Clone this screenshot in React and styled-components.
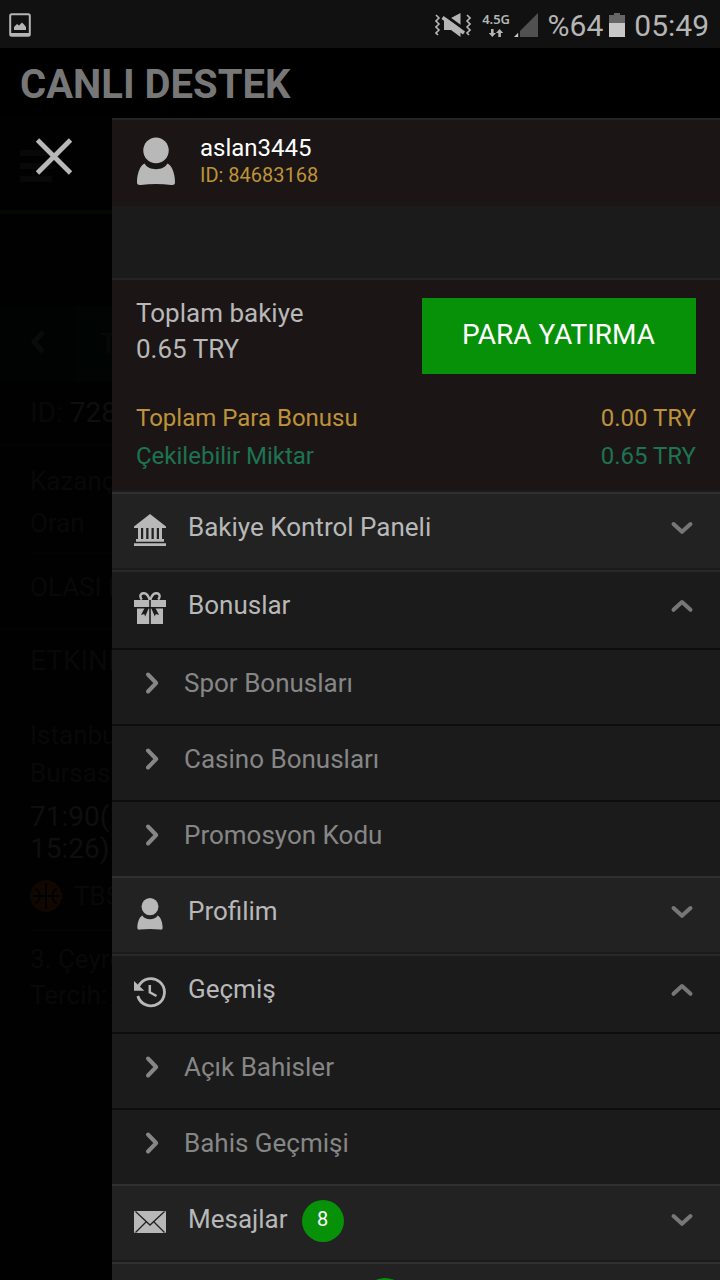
import React from "react";
import styled, { createGlobalStyle } from "styled-components";

const GlobalStyle = createGlobalStyle`
  * {
    box-sizing: border-box;
  }

  body {
    margin: 0;
    background: #000;
    font-family: Roboto, "Liberation Sans", sans-serif;
  }

  svg {
    display: block;
    flex-shrink: 0;
  }
`;

const Screen = styled.div`
  width: 720px;
  height: 1280px;
  overflow: hidden;
  background: #000;
  display: flex;
  flex-direction: column;
`;

const StatusBar = styled.div`
  height: 48px;
  flex-shrink: 0;
  padding: 0 11px 0 9px;
  background: #111;
  color: #b5b5b5;
  display: flex;
  align-items: center;
  justify-content: space-between;

  > svg {
    margin-top: 2px;
  }
`;

const StatusGroup = styled.div`
  display: flex;
  align-items: center;

  > svg {
    margin-top: 2px;
  }
`;

const StatusText = styled.span`
  font-size: 30px;
  line-height: 48px;
  padding-top: 3px;
  margin: 0 ${(props) => props.$right || 0}px 0 9px;
`;

const Network = styled.div`
  width: 27px;
  margin: 0 4px 0 12px;
  display: flex;
  flex-direction: column;
  align-items: center;
  font-family: "Noto Sans", sans-serif;
  font-weight: 600;
  font-size: 13px;
  line-height: 15px;

  svg {
    margin-top: 2px;
  }
`;

const TitleBar = styled.h1`
  height: 70px;
  flex-shrink: 0;
  margin: 0;
  padding-left: 20px;
  font-size: 40px;
  line-height: 73px;
  font-weight: 700;
  color: #777;
`;

const Main = styled.div`
  flex: 1;
  min-height: 0;
  display: flex;
`;

const Behind = styled.div`
  position: relative;
  width: 112px;
  flex-shrink: 0;
  overflow: hidden;
  background: #010101;
  color: #080808;
  font-size: 26px;
  white-space: nowrap;
`;

const CloseButton = styled.button`
  position: absolute;
  top: 20px;
  left: 36px;
  padding: 0;
  border: 0;
  background: none;
`;

const BehindHeader = styled.div`
  height: 96px;
  padding: 32px 20px 0;
  border-bottom: 4px solid #000a00;
`;

const BehindNav = styled.div`
  height: 76px;
  margin-top: 92px;
  background: #000504;
  display: flex;
  align-items: center;
`;

const BehindBack = styled.div`
  width: 76px;
  height: 76px;
  flex-shrink: 0;
  padding: 24px 30px;
  background: #000302;
`;

const BehindTitle = styled.span`
  padding: 0 0 1px 24px;
  font-size: 28px;
`;

const BehindLine = styled.div`
  height: ${(props) => props.$height}px;
  line-height: ${(props) => props.$height}px;
  padding-left: 30px;
  color: ${(props) => (props.$strong ? "#0e0e0e" : "#080808")};
  font-size: ${(props) => props.$size || 26}px;

  b {
    font-weight: 400;
    color: #0e0e0e;
  }
`;

const BehindSport = styled.div`
  height: 64px;
  padding: 0 0 2px 30px;
  display: flex;
  align-items: center;
  gap: 12px;
`;

const BehindRule = styled.div`
  height: 2px;
  margin-left: ${(props) => props.$left || 0}px;
  background: #030303;
`;

const Panel = styled.div`
  flex: 1;
  min-width: 0;
  background: #1b1b1b;
  color: #b8b8b8;
`;

const User = styled.div`
  height: 88px;
  padding: 17px 24px 0 25px;
  border-top: 2px solid #252323;
  background: #1b1615;
  display: flex;
  gap: 25px;
`;

const UserName = styled.div`
  margin-top: -3px;
  font-size: 24px;
  line-height: 28px;
  color: #fff;
`;

const UserId = styled.div`
  font-size: 20px;
  line-height: 26px;
  color: #be9239;
`;

const Balance = styled.div`
  height: 214px;
  margin-top: 72px;
  padding: 0 24px;
  border-top: 2px solid #252323;
  border-bottom: 2px solid #1b1b1b;
  background: #1b1615;
`;

const BalanceTop = styled.div`
  padding-top: 18px;
  display: flex;
  justify-content: space-between;
`;

const Total = styled.div`
  margin-top: -3px;
  font-size: 26px;
  line-height: 36px;
`;

const Deposit = styled.button`
  width: 274px;
  height: 76px;
  padding: 0 1px 4px 0;
  border: 0;
  background: #079108;
  color: #fff;
  font-family: inherit;
  font-size: 28px;
`;

const BalanceList = styled.div`
  margin-top: 25px;
`;

const BalanceRow = styled.div`
  display: flex;
  justify-content: space-between;
  font-size: 24px;
  line-height: 38px;
  color: ${(props) => props.$color};
`;

const MenuRow = styled.div`
  height: 78px;
  padding: 0 26px 0 22px;
  border-top: 2px solid ${(props) => (props.$open ? "#282828" : "#303030")};
  border-bottom: 2px solid #1b1b1b;
  background: ${(props) => (props.$open ? "#1b1b1b" : "#222")};
  display: flex;
  align-items: flex-start;

  > svg:first-child {
    margin: 20px 22px 0 0;
  }

  > svg:last-child {
    margin: 26px 0 0 auto;
  }
`;

const MenuLabel = styled.span`
  font-size: 26px;
  line-height: 66px;
`;

const Badge = styled.span`
  width: 42px;
  height: 42px;
  margin: 14px 0 0 14px;
  border-radius: 50%;
  background: #079108;
  color: #fff;
  font-size: 20px;
  line-height: 38px;
  text-align: center;
`;

const NextRow = styled(MenuRow)`
  padding-left: 238px;
`;

const SubRow = styled.div`
  height: 76px;
  padding-left: 32px;
  border-top: 2px solid #0d0d0d;
  display: flex;
  align-items: flex-start;
  color: #868686;
  font-size: 26px;
  line-height: 66px;

  svg {
    margin: 21px 24px 0 0;
  }
`;

const UserIcon = ({ width = 32, height = 32, viewBox = "-4 0 40 40.5" }) => (
  <svg width={width} height={height} viewBox={viewBox} fill="#b8b8b8">
    <ellipse cx="16" cy="10.9" rx="10.7" ry="10.9" />
    <path d="M6.4 22C9.4 28.4 22.6 28.4 25.6 22C29.5 23.8 32 30.5 32 38Q32 40.4 29 40Q16 38.2 3 40Q0 40.4 0 38C0 30.5 2.5 23.8 6.4 22Z" />
  </svg>
);

const BankIcon = () => (
  <svg width="32" height="32" viewBox="0 0 32 32" fill="#b8b8b8">
    <path d="M16 0L32 12.6V14H0V12.6Z" />
    <path d="M4 14h3v11H4zM9.2 14h3v11h-3zM14.5 14h3v11h-3zM19.8 14h3v11h-3zM25 14h3v11h-3z" />
    <path d="M2 25h28v2.8H2zM0 29.2h32v2.8H0z" />
  </svg>
);

const GiftIcon = () => (
  <svg width="32" height="32" viewBox="0 0 32 32">
    <path
      d="M15.7 8C14.5 3.8 12 1 9.3 1.2C6 1.4 5.5 5 7.8 7.6M16.3 8C17.5 3.8 20 1 22.7 1.2C26 1.4 26.5 5 24.2 7.6"
      fill="none"
      stroke="#b8b8b8"
      strokeWidth="2.4"
    />
    <path d="M0 8h32v7H0zM3 16.5h26V32H3z" fill="#b8b8b8" />
    <path d="M15.2 8h1.6v24h-1.6z" fill="#1b1b1b" />
    <path
      d="M14.8 16L11.2 24.5L10.2 22L7 23L10.6 16ZM17.2 16L20.8 24.5L21.8 22L25 23L21.4 16Z"
      fill="#1b1b1b"
    />
  </svg>
);

const HistoryIcon = () => (
  <svg width="32" height="32" viewBox="0 0 32 32">
    <path
      d="M4.6 10.3A13.6 13.6 0 1 1 3.8 20"
      fill="none"
      stroke="#b8b8b8"
      strokeWidth="2.8"
    />
    <path d="M0 5L10.3 14.8H0Z" fill="#b8b8b8" />
    <path d="M15.8 9V16.3L22.5 20" fill="none" stroke="#b8b8b8" strokeWidth="2.5" />
  </svg>
);

const MailIcon = () => (
  <svg width="32" height="32" viewBox="0 0 32 32">
    <rect y="5" width="32" height="22" rx="1" fill="#b8b8b8" />
    <path
      d="M1.5 5.5L16 19L30.5 5.5M1.5 26.5L12 16M30.5 26.5L20 16"
      fill="none"
      stroke="#222"
      strokeWidth="1.3"
    />
  </svg>
);

const Arrow = ({ up }) => (
  <svg width="24" height="16" viewBox="0 0 24 16">
    <path
      d={up ? "M3.5 11.8L12 4L20.5 11.8" : "M3.5 4L12 11.8L20.5 4"}
      fill="none"
      stroke="#777"
      strokeWidth="4"
      strokeLinecap="round"
      strokeLinejoin="round"
    />
  </svg>
);

const SubArrow = () => (
  <svg width="16" height="24" viewBox="0 0 16 24">
    <path
      d="M4 3.5L12.2 12L4 20.5"
      fill="none"
      stroke="#868686"
      strokeWidth="4"
      strokeLinecap="round"
      strokeLinejoin="round"
    />
  </svg>
);

const BatteryIcon = () => (
  <svg width="16" height="24" viewBox="0 0 16 24">
    <path d="M0 2h5V0h6v2h5v8H0z" fill="#666" />
    <path d="M0 10h16v14H0z" fill="#c8c8c8" />
  </svg>
);

const MuteIcon = () => (
  <svg width="36" height="24" viewBox="0 0 36 24">
    <path
      d="M1 2l3 3-3 3 3 3-3 3 3 3-3 3 2 2M32 2l3 3-3 3 3 3-3 3 3 3-3 3 2 2"
      fill="none"
      stroke="#b5b5b5"
      strokeWidth="1.6"
    />
    <path d="M9 5h7L25.5 0v24L16 17H9z" fill="#b5b5b5" />
    <path d="M9.5 2L31 17.5" stroke="#111" strokeWidth="3" />
    <path d="M7.5 4.5L29 20" stroke="#b5b5b5" strokeWidth="3.5" />
  </svg>
);

const menu = [
  { label: "Bakiye Kontrol Paneli", icon: <BankIcon /> },
  {
    label: "Bonuslar",
    icon: <GiftIcon />,
    items: ["Spor Bonusları", "Casino Bonusları", "Promosyon Kodu"],
  },
  { label: "Profilim", icon: <UserIcon /> },
  {
    label: "Geçmiş",
    icon: <HistoryIcon />,
    items: ["Açık Bahisler", "Bahis Geçmişi"],
  },
  { label: "Mesajlar", icon: <MailIcon />, badge: "8" },
];

function Status() {
  return (
    <StatusBar>
      <svg width="22" height="24" viewBox="0 0 22 24">
        <rect x="1.2" y="1.2" width="19.6" height="21.6" rx="1.5" fill="none" stroke="#b5b5b5" strokeWidth="2" />
        <path d="M1 20h20v3H1zM5 17v-3l3-3 2 1.5 3-3 2 2 2 2.5V17z" fill="#b5b5b5" />
      </svg>
      <StatusGroup>
        <MuteIcon />
        <Network>
          4.5G
          <svg width="16" height="8" viewBox="0 0 16 8" fill="#b5b5b5">
            <path d="M3 0h2.6v4H8L4.3 8 .8 4H3zM10.3 8h2.6V4h2.3L11.6 0 8 4h2.3z" />
          </svg>
        </Network>
        <svg width="25" height="24" viewBox="0 0 25 24">
          <path d="M24 0v24H6V18z" fill="#505050" />
          <path d="M0 24l4.2-4.2V24z" fill="#c8c8c8" />
        </svg>
        <StatusText $right={6}>%64</StatusText>
        <BatteryIcon />
        <StatusText>05:49</StatusText>
      </StatusGroup>
    </StatusBar>
  );
}

function CouponBehind() {
  return (
    <Behind>
      <BehindHeader>
        <svg width="32" height="32" viewBox="0 0 32 32" fill="#080808">
          <path d="M0 0h32v6H0zM0 13h32v6H0zM0 26h32v6H0z" />
        </svg>
      </BehindHeader>
      <BehindNav>
        <BehindBack>
          <svg width="16" height="26" viewBox="0 0 16 26">
            <path d="M13 2L4 12L13 22" fill="none" stroke="#0a0a0a" strokeWidth="5" />
          </svg>
        </BehindBack>
        <BehindTitle>T</BehindTitle>
      </BehindNav>
      <BehindLine $height={62} $size={28}>
        ID: <b>728</b>
      </BehindLine>
      <BehindRule />
      <BehindLine $height={70}>Kazanç</BehindLine>
      <BehindLine $height={14}>Oran</BehindLine>
      <BehindLine $height={22} />
      <BehindRule $left={30} />
      <BehindLine $height={66}>OLASI K</BehindLine>
      <BehindLine $height={8} />
      <BehindRule />
      <BehindLine $height={62} $size={28}>ETKINL</BehindLine>
      <BehindLine $height={24} />
      <BehindLine $height={38}>Istanbu</BehindLine>
      <BehindLine $height={38}>Bursas</BehindLine>
      <BehindLine $height={9} />
      <BehindLine $height={32} $size={28} $strong>71:90(1</BehindLine>
      <BehindLine $height={32} $size={28} $strong>15:26)</BehindLine>
      <BehindSport>
        <svg width="32" height="32" viewBox="0 0 32 32">
          <circle cx="16" cy="16" r="16" fill="#120600" />
          <path
            d="M16 3v26M3 16h26M5 9c6 1 6 13 0 14M27 9c-6 1-6 13 0 14"
            fill="none"
            stroke="#010101"
            strokeWidth="2"
          />
        </svg>
        <span>TBS</span>
      </BehindSport>
      <BehindRule $left={30} />
      <BehindLine $height={10} />
      <BehindLine $height={36}>3. Çeyre</BehindLine>
      <BehindLine $height={36}>Tercih:</BehindLine>
      <CloseButton aria-label="Kapat">
        <svg width="36" height="37" viewBox="0 0 36 37">
          <path d="M1.5 2L34.5 35M34.5 2L1.5 35" stroke="#b8b8b8" strokeWidth="4.8" />
        </svg>
      </CloseButton>
    </Behind>
  );
}

function App() {
  return (
    <Screen>
      <GlobalStyle />
      <Status />
      <TitleBar>CANLI DESTEK</TitleBar>
      <Main>
        <CouponBehind />
        <Panel>
          <User>
            <UserIcon width={38} height={49} viewBox="0 0 32 40.5" />
            <div>
              <UserName>aslan3445</UserName>
              <UserId>ID: 84683168</UserId>
            </div>
          </User>
          <Balance>
            <BalanceTop>
              <Total>
                <div>Toplam bakiye</div>
                <div>0.65 TRY</div>
              </Total>
              <Deposit>PARA YATIRMA</Deposit>
            </BalanceTop>
            <BalanceList>
              <BalanceRow $color="#be9239">
                <span>Toplam Para Bonusu</span>
                <span>0.00 TRY</span>
              </BalanceRow>
              <BalanceRow $color="#1d7352">
                <span>Çekilebilir Miktar</span>
                <span>0.65 TRY</span>
              </BalanceRow>
            </BalanceList>
          </Balance>
          {menu.map((entry) => (
            <React.Fragment key={entry.label}>
              <MenuRow $open={Boolean(entry.items)}>
                {entry.icon}
                <MenuLabel>{entry.label}</MenuLabel>
                {entry.badge && <Badge>{entry.badge}</Badge>}
                <Arrow up={Boolean(entry.items)} />
              </MenuRow>
              {entry.items &&
                entry.items.map((item) => (
                  <SubRow key={item}>
                    <SubArrow />
                    {item}
                  </SubRow>
                ))}
            </React.Fragment>
          ))}
          <NextRow>
            <Badge />
          </NextRow>
        </Panel>
      </Main>
    </Screen>
  );
}

export default App;
